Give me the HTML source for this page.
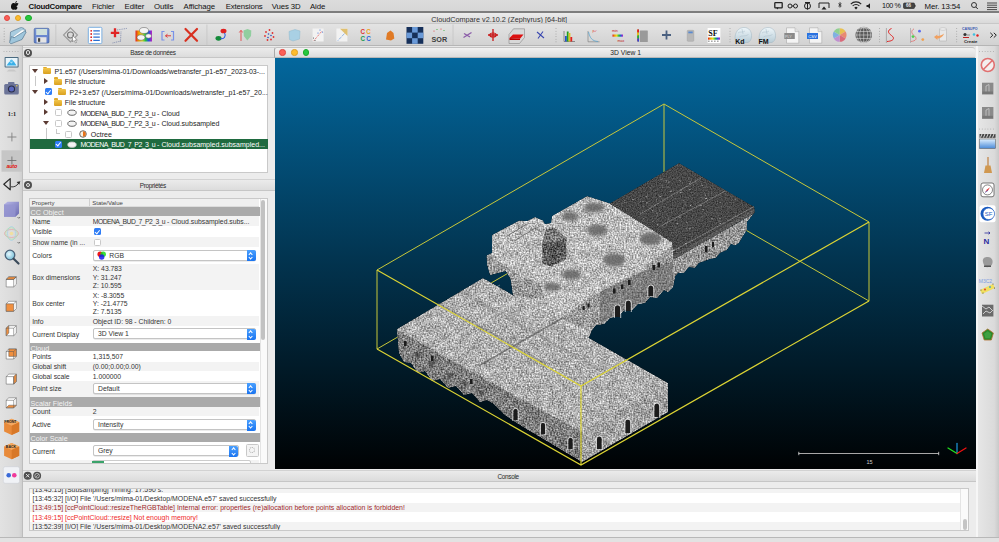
<!DOCTYPE html>
<html><head><meta charset="utf-8"><style>
*{margin:0;padding:0;box-sizing:border-box}
html,body{width:999px;height:542px;overflow:hidden;background:#e8e8e8;font-family:"Liberation Sans",sans-serif;color:#222}
.a{position:absolute}
.t{position:absolute;white-space:nowrap;line-height:1}
.tl{position:absolute;border-radius:50%}
.dockt{position:absolute;background:linear-gradient(#ebebeb,#dcdcdc);border-top:1px solid #d2d2d2;border-bottom:1px solid #c6c6c6}
.box{position:absolute;background:#fff;border:1px solid #c9c9c9}
.row{position:absolute;left:0;width:229px}
.band{position:absolute;left:0;width:230px;background:#aaaaaa}
.band span{position:absolute;left:0.5px;top:1.5px;font-size:7.2px;color:#f2f2f2;line-height:1}
.lbl{position:absolute;left:2.2px;font-size:6.8px;color:#333;line-height:1;white-space:nowrap}
.val{position:absolute;left:62.8px;font-size:6.8px;color:#333;line-height:1;white-space:nowrap}
.combo{position:absolute;left:63px;width:163px;height:11px;background:#fff;border:0.5px solid #c4c4c4;border-radius:2px;box-shadow:0 0.5px 0.5px rgba(0,0,0,.15)}
.combo .btn{position:absolute;right:-0.5px;top:-0.5px;width:9px;height:11px;background:linear-gradient(#4aa0ff,#1a74f0);border-radius:0 2px 2px 0}
.combo .btn:before{content:"";position:absolute;left:2.8px;top:2.5px;width:2.2px;height:2.2px;border-left:0.8px solid #fff;border-top:0.8px solid #fff;transform:rotate(45deg)}
.combo .btn:after{content:"";position:absolute;left:2.8px;top:5.8px;width:2.2px;height:2.2px;border-right:0.8px solid #fff;border-bottom:0.8px solid #fff;transform:rotate(45deg)}
.combo span{position:absolute;left:4px;top:2px;font-size:6.8px;color:#333;line-height:1;white-space:nowrap}
.tr{position:absolute;font-size:7px;color:#1a1a1a;line-height:1;white-space:nowrap}
.tri{position:absolute;width:0;height:0}
.cb{position:absolute;width:7px;height:7px;border:0.7px solid #c8c8c8;border-radius:1.5px;background:#fff}
.cbon{position:absolute;width:7px;height:7px;border-radius:1.5px;background:#2f7df6}
.cbon:after{content:"";position:absolute;left:2.2px;top:0.7px;width:1.8px;height:3.6px;border-right:1px solid #fff;border-bottom:1px solid #fff;transform:rotate(40deg)}
.folder{position:absolute;width:8px;height:6px;background:linear-gradient(#f3c64a,#d9a020);border-radius:1px}
.folder:before{content:"";position:absolute;left:0;top:-1.3px;width:3.5px;height:1.5px;background:#e0aa2a;border-radius:1px 1px 0 0}
.con{position:absolute;left:3px;font-size:6.9px;line-height:1;white-space:nowrap;color:#222}
</style></head><body>
<div class="a" style="left:0;top:0;width:999px;height:11px;background:linear-gradient(#dcdcdc,#d6d6d6)"></div>
<div class="a" style="left:0;top:11px;width:999px;height:1.5px;background:#7e7e7e"></div>
<svg class="a" style="left:10.5px;top:1.2px" width="8" height="8.5" viewBox="0 0 16 17"><path d="M13.2 9.1c0-2.3 1.9-3.4 2-3.5-1.1-1.6-2.8-1.8-3.4-1.8-1.4-.1-2.8.9-3.5.9-.7 0-1.8-.8-3-.8C3.7 3.9 2.2 4.8 1.4 6.2-.2 9-.9 13.2 1.6 16.1c.7 1 1.6 1.4 2.6 1.4 1 0 1.4-.7 2.7-.7 1.2 0 1.6.7 2.7.6 1.1 0 1.8-1 2.5-1.9.8-1.1 1.1-2.2 1.1-2.3 0 0-2.1-.8-2.1-3.3zM11 2.6c.6-.7 1-1.7.9-2.6-.8 0-1.9.6-2.5 1.3-.5.6-1 1.6-.9 2.5.9.1 1.9-.5 2.5-1.2z" fill="#111"/></svg>
<div class="t" style="left:28.5px;top:2.5px;font-size:7.8px;font-weight:bold;color:#111;letter-spacing:-0.2px">CloudCompare</div>
<div class="t" style="left:92px;top:2.5px;font-size:7.8px;letter-spacing:-0.12px;color:#111">Fichier</div>
<div class="t" style="left:124.6px;top:2.5px;font-size:7.8px;letter-spacing:-0.12px;color:#111">Editer</div>
<div class="t" style="left:154px;top:2.5px;font-size:7.8px;letter-spacing:-0.12px;color:#111">Outils</div>
<div class="t" style="left:183.6px;top:2.5px;font-size:7.8px;letter-spacing:-0.12px;color:#111">Affichage</div>
<div class="t" style="left:225.7px;top:2.5px;font-size:7.8px;letter-spacing:-0.12px;color:#111">Extensions</div>
<div class="t" style="left:271.7px;top:2.5px;font-size:7.8px;letter-spacing:-0.12px;color:#111">Vues 3D</div>
<div class="t" style="left:310px;top:2.5px;font-size:7.8px;letter-spacing:-0.12px;color:#111">Aide</div>
<svg class="a" style="left:770px;top:0" width="229" height="11" viewBox="770 0 229 11">
<g fill="none" stroke="#222" stroke-width="1">
<rect x="774.8" y="2.6" width="7.4" height="5.2" rx="0.6" stroke-width="1.3"/>
<path d="M776.2 7.6l1.2 2 1.2-2" fill="#222" stroke="none"/>
<circle cx="790" cy="6" r="2" /><circle cx="795.5" cy="6" r="2"/><path d="M792 6h1.5"/>
<circle cx="807.5" cy="6" r="3"/><path d="M805 2.5h5M807.5 2.5v7"/>
<path d="M819 8V3h10v5"/><path d="M821.5 9.5h5l-2.5-3z" fill="#222" stroke="none"/>
<path d="M838.3 3.5l3 2.5-1.5 1.3V2.5l1.5 1.2-3 2.6" stroke-width="0.7"/>
<path d="M850.8 4.2a7 7 0 0 1 10.4 0M852.6 6a4.6 4.6 0 0 1 6.8 0" stroke-width="1.1"/><path d="M854.3 7.7a2.4 2.4 0 0 1 3.4 0L856 9.5z" fill="#222" stroke="none"/>
<path d="M866.5 5h1.5l2-1.8v5.6l-2-1.8h-1.5z" fill="#222" stroke="none"/>
<rect x="903.5" y="3" width="11" height="5.5" rx="1" fill="#444" stroke="#222" stroke-width="0.6"/>
<path d="M915 4.8v2" stroke-width="1"/>
<circle cx="974" cy="5" r="2.5" stroke-width="0.9"/><path d="M975.8 7l2 2" stroke-width="1"/>
<path d="M987 3h10M987 5.2h10M987 7.4h10M987 9.6h10" stroke-width="0.8"/>
</g></svg>
<div class="t" style="left:882px;top:2.4px;font-size:7.2px;letter-spacing:-0.35px;color:#111">100 %</div>
<div class="t" style="left:906px;top:3.6px;font-size:4.5px;color:#eee;font-weight:bold">66</div>
<div class="t" style="left:924.6px;top:2.5px;font-size:7.8px;letter-spacing:-0.12px;color:#111">Mer. 13:54</div>
<div class="a" style="left:0;top:12.5px;width:999px;height:10.5px;background:linear-gradient(#ececec,#d9d9d9)"></div>
<div class="tl" style="left:3.9000000000000004px;top:14.8px;width:6.6px;height:6.6px;background:#fc5f57;border:0.5px solid #e14640"></div>
<div class="tl" style="left:14.599999999999998px;top:14.8px;width:6.6px;height:6.6px;background:#fdbc2e;border:0.5px solid #dfa023"></div>
<div class="tl" style="left:25.0px;top:14.8px;width:6.6px;height:6.6px;background:#28c840;border:0.5px solid #1aab29"></div>
<div class="t" style="left:431.3px;top:15.8px;font-size:7.25px;color:#333">CloudCompare v2.10.2 (Zephyrus) [64-bit]</div>
<div class="a" style="left:0;top:23px;width:999px;height:23px;background:linear-gradient(#e3e3e3,#d2d2d2);border-top:0.5px solid #c8c8c8;border-bottom:1px solid #b5b5b5"></div>
<svg class="a" style="left:0;top:23px" width="999" height="23" viewBox="0 23 999 23">
<defs>
<linearGradient id="gfold" x1="0" y1="0" x2="0" y2="1"><stop offset="0" stop-color="#cfe6f2"/><stop offset="1" stop-color="#8fbcd6"/></linearGradient>
<linearGradient id="gflop" x1="0" y1="0" x2="0" y2="1"><stop offset="0" stop-color="#7a96d8"/><stop offset="1" stop-color="#5a7ac8"/></linearGradient>
<linearGradient id="grain" x1="0" y1="0" x2="1" y2="0"><stop offset="0" stop-color="#e02020"/><stop offset=".2" stop-color="#f0a000"/><stop offset=".4" stop-color="#e8e020"/><stop offset=".6" stop-color="#20c040"/><stop offset=".8" stop-color="#2050e0"/><stop offset="1" stop-color="#c020c0"/></linearGradient>
<linearGradient id="gkd" x1="0" y1="0" x2="0" y2="1"><stop offset="0" stop-color="#eef6fa"/><stop offset="1" stop-color="#b8ccd6"/></linearGradient>
</defs>
<!-- handle dots -->
<g fill="#a8a8a8"><circle cx="4.2" cy="28.5" r="0.55"/><circle cx="4.2" cy="31.2" r="0.55"/><circle cx="4.2" cy="33.9" r="0.55"/><circle cx="4.2" cy="36.6" r="0.55"/><circle cx="4.2" cy="39.3" r="0.55"/><circle cx="4.2" cy="41.6" r="0.55"/></g>
<!-- open folder -->
<path d="M10 41.5 L10.5 32 L19.5 28 L21.5 27.5 L24 28.5 L25.5 30 L25.5 31.5 L22 39 Z" fill="#a8cce0" stroke="#5c7e96" stroke-width="0.7"/>
<path d="M13 36.5 L22 29.8 L24.5 30.2 L24.8 31.2 L15.5 38 Z" fill="#fafcfd" stroke="#8aa4b4" stroke-width="0.4"/>
<path d="M9.5 42.5 L11.5 36.5 L14 37.8 L24.8 31 L26.2 32 L22 39.5 L11 43.8 Z" fill="#9fc6dc" stroke="#5c7e96" stroke-width="0.7"/>
<!-- floppy -->
<rect x="34.2" y="28.3" width="14.8" height="14.8" rx="1.2" fill="url(#gflop)" stroke="#3b5a98" stroke-width="0.6"/>
<rect x="36.2" y="29" width="10.8" height="6" fill="#cfe0dc"/>
<rect x="36.5" y="37.2" width="10" height="5.5" fill="#e4e4e4"/>
<rect x="38" y="38.2" width="2.2" height="3.6" fill="#444"/>
<!-- separator -->
<line x1="55.8" y1="24.5" x2="55.8" y2="45" stroke="#c4c4c4" stroke-width="0.8"/>
<!-- pick icon -->
<g fill="none" stroke="#8a8a8a" stroke-width="1.1">
<path d="M70.5 27.8 L77.5 35 L70.5 42 L63.5 35 Z" stroke="#9a9a9a"/>
<circle cx="70.5" cy="35" r="3" stroke="#777"/>
</g>
<path d="M72.5 35.5 L72.5 42 L74 40.5 L75.5 43 L76.5 42.5 L75.2 40 L77.3 40 Z" fill="#fff" stroke="#777" stroke-width="0.6"/>
<!-- list -->
<rect x="88.3" y="27.3" width="13.6" height="16.3" rx="1.2" fill="#fff" stroke="#7aaee0" stroke-width="1"/>
<g fill="#d82020"><circle cx="91.2" cy="30.8" r="0.9"/><circle cx="91.2" cy="34" r="0.9"/><circle cx="91.2" cy="37.2" r="0.9"/><circle cx="91.2" cy="40.4" r="0.9"/></g>
<g stroke="#2a6ed0" stroke-width="1.2"><path d="M93.3 30.8h6.5M93.3 34h6.5M93.3 37.2h6.5M93.3 40.4h6.5"/></g>
<!-- red cross with dotted -->
<path d="M110.8 32.8h8.5M115 28.3v9" stroke="#e02525" stroke-width="2.3"/>
<path d="M117 30 L127.5 28.3M121 31.5 L120.5 41.5 M112.5 43 L121 41" stroke="#5a6a9a" stroke-width="0.6" stroke-dasharray="1 0.8"/>
<!-- rainbow sheep -->
<rect x="135.5" y="30.5" width="16.5" height="11" fill="url(#grain)"/>
<ellipse cx="144" cy="30.5" rx="4.5" ry="3" fill="#f4f4f4" stroke="#555" stroke-width="0.5"/>
<ellipse cx="141" cy="37.5" rx="4" ry="2.8" fill="#f4f4f4" stroke="#555" stroke-width="0.5"/>
<ellipse cx="148.5" cy="36" rx="3" ry="2.2" fill="#f4f4f4" stroke="#555" stroke-width="0.5"/>
<!-- [<-] -->
<path d="M164.5 31.5h-2.5v8.5h2.5M171 31.5h2.5v8.5H171" fill="none" stroke="#7a92e8" stroke-width="1.2"/>
<path d="M165.5 35.8h5.5M165.5 35.8l2-1.6M165.5 35.8l2 1.6" stroke="#e03a3a" stroke-width="1"/>
<!-- red X -->
<path d="M185.5 29 L197 40.8 M197 29 L185.5 40.8" stroke="#d83020" stroke-width="2.2" stroke-linecap="round"/>
<line x1="206.9" y1="24.5" x2="206.9" y2="45" stroke="#c4c4c4" stroke-width="0.8"/>
<!-- blobs -->
<ellipse cx="223.5" cy="31" rx="3" ry="2.3" fill="#e02020"/>
<ellipse cx="218.5" cy="38.3" rx="3" ry="2.4" fill="#148a3a"/>
<path d="M224.5 33 C226.5 36 224 39.5 220.5 38.5" fill="none" stroke="#2a5ae0" stroke-width="1.1"/>
<!-- arrow + shield -->
<path d="M241 41v-10M239.3 32.5l1.7-2.3 1.7 2.3" stroke="#e04a4a" stroke-width="0.9" fill="none"/>
<path d="M243.5 30.5 L247.5 29 L251.3 30.5 L251 36 L247.3 40.5 L243.8 36 Z" fill="#88cc98" opacity="0.9"/>
<!-- red/blue dots -->
<g fill="#e03030"><circle cx="266" cy="32" r="0.9"/><circle cx="269.5" cy="30" r="0.9"/><circle cx="272.5" cy="33" r="0.9"/><circle cx="265" cy="36" r="0.9"/><circle cx="271" cy="39.5" r="0.9"/><circle cx="267.5" cy="40" r="0.9"/><circle cx="273.5" cy="37" r="0.9"/></g>
<g fill="#3050c0"><circle cx="268.5" cy="34" r="0.8"/><circle cx="271" cy="35.5" r="0.8"/><circle cx="268" cy="37.5" r="0.8"/></g>
<!-- light blue blob -->
<path d="M289 31.5 L295 29.5 L300 31 L299.5 39 L293 41 L289.5 39.5 Z" fill="#a9d0e4" stroke="#8fb8cc" stroke-width="0.5"/>
<!-- dots-line -->
<rect x="312.6" y="28.5" width="11" height="13" fill="#f2f2f2"/>
<path d="M314 40.5 L322 31" stroke="#e03a3a" stroke-width="0.8" stroke-dasharray="1 1"/>
<g fill="#3a6ad0"><circle cx="320" cy="30" r="0.6"/><circle cx="322.5" cy="32" r="0.6"/><circle cx="318" cy="33" r="0.6"/></g>
<g fill="#333"><circle cx="313.5" cy="38" r="0.5"/><circle cx="315" cy="40.5" r="0.5"/></g>
<!-- triangle yellow -->
<rect x="336.4" y="28.5" width="11" height="13" fill="#f2f2f2"/>
<path d="M340 28.7 L347.5 28.7 L347.5 36 Z" fill="#e0c070"/>
<path d="M338 40.5 L345 33" stroke="#3a7ad0" stroke-width="0.8" stroke-dasharray="1 1"/>
<!-- CCCC -->
<text x="360.5" y="34" font-family="Liberation Sans" font-weight="bold" font-size="6.3" fill="#e03030">C</text>
<text x="366.2" y="34" font-family="Liberation Sans" font-weight="bold" font-size="6.3" fill="#f0a020">C</text>
<text x="360.5" y="41.2" font-family="Liberation Sans" font-weight="bold" font-size="6.3" fill="#209a50">C</text>
<text x="366.2" y="41.2" font-family="Liberation Sans" font-weight="bold" font-size="6.3" fill="#2a60d8">C</text>
<!-- orange blob -->
<path d="M387 33 L390.5 30.5 L393.5 33 L394.3 38.5 L391 40.5 L386 39.5 Z" fill="#e07a25"/>
<!-- checker -->
<rect x="406.5" y="27" width="16.8" height="16.8" fill="#16305a"/>
<g fill="#6a9ad8"><rect x="412.1" y="27" width="5.6" height="5.6"/><rect x="406.5" y="32.6" width="5.6" height="5.6"/><rect x="417.7" y="32.6" width="5.6" height="5.6"/><rect x="412.1" y="38.2" width="5.6" height="5.6"/></g>
<!-- SOR -->
<text x="431.5" y="42" font-family="Liberation Sans" font-weight="bold" font-size="7.2" fill="#404040">SOR</text>
<g fill="#e04040"><circle cx="434" cy="31" r="0.6"/><circle cx="441" cy="29" r="0.6"/></g><g fill="#40b040"><circle cx="437" cy="29.5" r="0.6"/><circle cx="444" cy="30.5" r="0.6"/></g>
<line x1="453" y1="24.5" x2="453" y2="45" stroke="#c4c4c4" stroke-width="0.8"/>
<!-- purple scissors -->
<path d="M463.5 37.5 L471.5 32.5 M464 33.5 L470 37" stroke="#8a5aa8" stroke-width="1.2"/>
<!-- red move -->
<path d="M493 29v12M488 35h10" stroke="#c81818" stroke-width="1.3"/>
<ellipse cx="493" cy="35" rx="3.2" ry="2" fill="none" stroke="#c81818" stroke-width="1.1"/>
<!-- red box -->
<path d="M509 34.5 L513.5 28.8 L524.5 28.8 L524.5 37.5 L519.5 43.5 L509 43.5 Z" fill="#d8d8d8" stroke="#888" stroke-width="0.6"/>
<path d="M509.5 38 L513 34.5 L523.5 34.5 L520 38.8 Z" fill="#dc1010"/>
<path d="M509.5 38 L520 38.8 L520 40 L509.5 40 Z" fill="#b00"/>
<!-- blue scissors -->
<path d="M537 32 L544 38 M538 38.5 L543 31.5" stroke="#3a48b0" stroke-width="1.1"/>
<g fill="#a0a0a0"><circle cx="556" cy="28.5" r="0.5"/><circle cx="556" cy="31.2" r="0.5"/><circle cx="556" cy="33.9" r="0.5"/><circle cx="556" cy="36.6" r="0.5"/><circle cx="556" cy="39.3" r="0.5"/><circle cx="556" cy="41.8" r="0.5"/></g>
<!-- histogram -->
<path d="M564 31 V41.5 H575" fill="none" stroke="#555" stroke-width="0.6"/>
<rect x="565" y="36" width="1.8" height="5.5" fill="#2050d0"/><rect x="566.8" y="31.5" width="1.8" height="10" fill="#20a020"/><rect x="568.6" y="33" width="1.8" height="8.5" fill="#e0c020"/><rect x="570.4" y="37" width="1.8" height="4.5" fill="#e02020"/>
<!-- curve -->
<path d="M588 31 V41.8 H599.5" fill="none" stroke="#777" stroke-width="0.6"/>
<path d="M588.5 32 C590 38 592 41 598 41.5" fill="none" stroke="#50a0d0" stroke-width="0.7"/>
<text x="592.5" y="31.5" font-family="Liberation Sans" font-size="3.5" fill="#e03030">pᵤᶠ</text>
<!-- min/max -->
<text x="612" y="31.5" font-family="Liberation Sans" font-size="3.6" fill="#c02020">min</text>
<rect x="612.5" y="34.5" width="10.5" height="2.2" fill="url(#grain)"/>
<text x="617.5" y="41.5" font-family="Liberation Sans" font-size="3.6" fill="#c02020">max</text>
<!-- color bar -->
<rect x="637.2" y="29.5" width="1.8" height="12" fill="url(#grain)" transform="rotate(0)"/>
<path d="M637.2 29.5h1.8v3h-1.8z" fill="#e02020"/><path d="M637.2 32.5h1.8v3h-1.8z" fill="#e0c020"/><path d="M637.2 35.5h1.8v3h-1.8z" fill="#20b040"/><path d="M637.2 38.5h1.8v3h-1.8z" fill="#4040d0"/>
<rect x="639.8" y="30.5" width="8" height="11.5" fill="#9a9a9a" rx="0.5"/>
<!-- plus -->
<path d="M662 35h9M666.5 30.5v9" stroke="#4a6080" stroke-width="1.8"/>
<!-- calc -->
<rect x="687.2" y="30.3" width="6.6" height="11" rx="0.8" fill="#b8b8b8" stroke="#999" stroke-width="0.4"/>
<rect x="688.3" y="31.5" width="4.4" height="1.8" fill="#5a8ad0"/>
<!-- SF -->
<rect x="707.6" y="28" width="12.8" height="15" fill="#fff"/>
<text x="708.2" y="36" font-family="Liberation Serif" font-weight="bold" font-size="8" fill="#111">SF</text>
<rect x="708" y="37.5" width="12" height="2.2" fill="url(#grain)"/>
<g fill="#555"><rect x="708.5" y="40.5" width="0.8" height="1.5"/><rect x="711.5" y="40.5" width="0.8" height="1.5"/><rect x="714.5" y="40.5" width="0.8" height="1.5"/><rect x="717.5" y="40.5" width="0.8" height="1.5"/></g>
<g fill="#a0a0a0"><circle cx="730" cy="28.5" r="0.5"/><circle cx="730" cy="31.2" r="0.5"/><circle cx="730" cy="33.9" r="0.5"/><circle cx="730" cy="36.6" r="0.5"/><circle cx="730" cy="39.3" r="0.5"/><circle cx="730" cy="41.8" r="0.5"/></g>
<!-- Kd, FM -->
<path d="M735.5 41 C734 35 736.5 28.5 743 27.5 C749.5 27 752 32 751.5 37 C751.3 39.5 750 41.5 748 42.5 L737 42.5 Z" fill="url(#gkd)" stroke="#9fb4c0" stroke-width="0.5"/>
<path d="M738 33 C740 31 743 33 745 31 M739.5 37 C742 35 745 37 748.5 34.5 M742 29 L743 34" fill="none" stroke="#a8bcc8" stroke-width="0.5"/>
<text x="735.3" y="43.6" font-family="Liberation Sans" font-weight="bold" font-size="7" fill="#111">Kd</text>
<path d="M759.5 41 C758 35 760.5 28.5 767 27.5 C773.5 27 776 32 775.5 37 C775.3 39.5 774 41.5 772 42.5 L761 42.5 Z" fill="url(#gkd)" stroke="#9fb4c0" stroke-width="0.5"/>
<path d="M762 33 C764 31 767 33 769 31 M763.5 37 C766 35 769 37 772.5 34.5 M766 29 L767 34" fill="none" stroke="#a8bcc8" stroke-width="0.5"/>
<text x="758.6" y="43.6" font-family="Liberation Sans" font-weight="bold" font-size="7" fill="#111">FM</text>
<!-- doc icons -->
<path d="M786.5 27.8 H795 L798.8 31.6 V43.2 H786.5 Z" fill="#f4f4f4" stroke="#a8a8a8" stroke-width="0.6"/>
<path d="M795 27.8 V31.6 H798.8" fill="#e0e0e0" stroke="#a8a8a8" stroke-width="0.5"/>
<rect x="784.3" y="33" width="10.5" height="6" fill="#8a8a8a"/>
<text x="785" y="37.7" font-family="Liberation Sans" font-size="3.8" fill="#ddd">PLY</text>
<path d="M809.5 27.8 H818 L821.8 31.6 V43.2 H809.5 Z" fill="#f4f4f4" stroke="#a8a8a8" stroke-width="0.6"/>
<path d="M818 27.8 V31.6 H821.8" fill="#e0e0e0" stroke="#a8a8a8" stroke-width="0.5"/>
<rect x="807" y="33" width="11" height="6" fill="#2a72e0"/>
<text x="808.2" y="37.8" font-family="Liberation Sans" font-size="4.2" fill="#fff">CSV</text>
<!-- pie -->
<g transform="translate(839.7 35)">
<path d="M0 0 L0 -6.8 A6.8 6.8 0 0 1 5.9 -3.4 Z" fill="#e8c050"/>
<path d="M0 0 L5.9 -3.4 A6.8 6.8 0 0 1 5.9 3.4 Z" fill="#e88a70"/>
<path d="M0 0 L5.9 3.4 A6.8 6.8 0 0 1 0 6.8 Z" fill="#d86a7a"/>
<path d="M0 0 L0 6.8 A6.8 6.8 0 0 1 -5.9 3.4 Z" fill="#c090d0"/>
<path d="M0 0 L-5.9 3.4 A6.8 6.8 0 0 1 -5.9 -3.4 Z" fill="#80b0e0"/>
<path d="M0 0 L-5.9 -3.4 A6.8 6.8 0 0 1 0 -6.8 Z" fill="#90d090"/>
</g>
<!-- globe -->
<circle cx="863.7" cy="35" r="8.3" fill="#5a5a5a"/>
<g fill="none" stroke="#e8e8e8" stroke-width="0.5"><ellipse cx="863.7" cy="35" rx="4" ry="8"/><ellipse cx="863.7" cy="35" rx="7" ry="8"/><path d="M856 31.5h15.5M855.5 35h16.5M856 38.5h15.5M858 28h11.5M858 42h11.5M863.7 27v16"/></g>
<g fill="#a0a0a0"><circle cx="879.5" cy="28.5" r="0.5"/><circle cx="879.5" cy="31.2" r="0.5"/><circle cx="879.5" cy="33.9" r="0.5"/><circle cx="879.5" cy="36.6" r="0.5"/><circle cx="879.5" cy="39.3" r="0.5"/><circle cx="879.5" cy="41.8" r="0.5"/></g>
<!-- red curve -->
<line x1="886.4" y1="28" x2="886.4" y2="43" stroke="#888" stroke-width="0.6"/>
<path d="M891.5 28.5 C887 30.5 888 33 891.5 35.5 C895 38 894 41 887 41.5" fill="none" stroke="#e02020" stroke-width="1"/>
<!-- curve with dots -->
<line x1="910.5" y1="28" x2="910.5" y2="43" stroke="#999" stroke-width="0.6"/>
<path d="M914 28.8 C910.5 31 911.5 33.5 914.5 36 C917.5 38.5 916 41 910.8 41.5" fill="none" stroke="#e07070" stroke-width="0.8"/>
<circle cx="919.5" cy="31.2" r="1.4" fill="#5a6af0"/><circle cx="913" cy="36.6" r="1.4" fill="#50d050"/><circle cx="922.8" cy="39.6" r="1.4" fill="#f0a050"/>
<!-- arrow cylinder -->
<path d="M939.5 29 h7 v12 h-7 z" fill="#e8e8e8" stroke="#aaa" stroke-width="0.5"/>
<ellipse cx="943" cy="29" rx="3.5" ry="1.2" fill="#f4f4f4" stroke="#aaa" stroke-width="0.5"/>
<path d="M934 37 L937.5 34.5 L937.3 36 C940 36 942.5 35 944 33.5 C943 37 940 38.5 937.3 38.5 L937.5 40 Z" fill="#f0a060"/>
<g fill="#a0a0a0"><circle cx="956.7" cy="28.5" r="0.5"/><circle cx="956.7" cy="31.2" r="0.5"/><circle cx="956.7" cy="33.9" r="0.5"/><circle cx="956.7" cy="36.6" r="0.5"/><circle cx="956.7" cy="39.3" r="0.5"/><circle cx="956.7" cy="41.8" r="0.5"/></g>
<!-- CANUPO -->
<text x="962" y="30.3" font-family="Liberation Sans" font-weight="bold" font-size="3.6" fill="#3a58b0">CANUPO</text>
<circle cx="965" cy="34.5" r="1.6" fill="#333"/><path d="M967 35h3" stroke="#555" stroke-width="0.6"/><circle cx="974" cy="34.5" r="1.3" fill="#40c0e0"/><circle cx="977.5" cy="35.5" r="1.2" fill="#e02020"/>
<rect x="963" y="37" width="6" height="1" fill="#c02020"/>
<text x="964" y="42.5" font-family="Liberation Sans" font-weight="bold" font-size="4.3" fill="#222">Create</text>
<!-- >> -->
<path d="M990.3 32.8 L992.8 35.2 L990.3 37.6 M993.8 32.8 L996.3 35.2 L993.8 37.6" fill="none" stroke="#222" stroke-width="1"/>
</svg>

<div class="a" style="left:0;top:46px;width:22.5px;height:491px;background:linear-gradient(90deg,#e2e2e2,#d8d8d8 85%,#cfcfcf);border-right:0.5px solid #bdbdbd"></div>
<svg class="a" style="left:0;top:46px" width="23" height="491" viewBox="0 46 23 491">
<defs>
<linearGradient id="gcube" x1="0" y1="0" x2="1" y2="1"><stop offset="0" stop-color="#b8b8e8"/><stop offset="1" stop-color="#6a6ab0"/></linearGradient>
<radialGradient id="gmag" cx=".4" cy=".4" r=".6"><stop offset="0" stop-color="#e8f8ff"/><stop offset="1" stop-color="#7ac0d8"/></radialGradient>
</defs>
<g fill="#a8a8a8"><circle cx="4" cy="51.6" r="0.5"/><circle cx="6.8" cy="51.6" r="0.5"/><circle cx="9.6" cy="51.6" r="0.5"/><circle cx="12.4" cy="51.6" r="0.5"/><circle cx="15.2" cy="51.6" r="0.5"/><circle cx="18" cy="51.6" r="0.5"/></g>
<!-- monitor -->
<rect x="4.6" y="57" width="14" height="10.5" rx="0.8" fill="#4a6a80" />
<rect x="5.6" y="58" width="12" height="8.5" fill="#e8f4fa"/>
<path d="M6.5 65.5 L9.5 61.5 L11.5 63.5 L13.5 61 L16.5 65.5 Z" fill="#3ab0e8"/>
<circle cx="11.5" cy="61" r="1.6" fill="#5ac0f0"/>
<path d="M9 69.5 L14 69.5 L16.5 71.5 L6.5 71.5 Z" fill="#c8c8c8"/>
<!-- camera -->
<rect x="4.2" y="84" width="14.6" height="10.5" rx="1.5" fill="#6c7498"/>
<rect x="8" y="82" width="6.5" height="2.5" rx="0.8" fill="#6c7498"/>
<circle cx="11.5" cy="89" r="3.6" fill="#2a2e48"/>
<circle cx="11.5" cy="89" r="2.5" fill="#5a68c0"/>
<circle cx="16.8" cy="85.8" r="0.7" fill="#f0d040"/>
<!-- 1:1 -->
<text x="7.8" y="115.5" font-family="Liberation Serif" font-weight="bold" font-size="6.2" fill="#222">1:1</text>
<!-- plus -->
<path d="M7.4 137h9M11.9 132.6v8.8" stroke="#808080" stroke-width="0.9"/>
<!-- auto (highlighted) -->
<rect x="1.5" y="150.3" width="20.7" height="21.4" fill="#c6c6c6"/>
<path d="M7.4 160.5h9M11.9 156.5v8" stroke="#707070" stroke-width="0.9"/>
<text x="6.4" y="167.6" font-family="Liberation Sans" font-weight="bold" font-style="italic" font-size="5.4" fill="#e01010" letter-spacing="-0.2">auto</text>
<!-- triangle arrow -->
<path d="M3.8 184.2 L10.2 178.6 L10.2 189.8 Z" fill="none" stroke="#2a2a2a" stroke-width="1.2" stroke-linejoin="round"/>
<path d="M11 186.8 C14 187.3 16.5 186.2 18.8 183" fill="none" stroke="#2a2a2a" stroke-width="0.9"/>
<path d="M20.3 181.3 L16.6 182.1 L19.3 184.8 Z" fill="#2a2a2a"/>
<!-- purple cube -->
<path d="M4 204.5 L7.5 201.8 L19 201.8 L19 213.5 L15.5 216.8 L4 216.8 Z" fill="url(#gcube)"/>
<path d="M4 204.5 L15.5 204.5 L15.5 216.8 L4 216.8 Z" fill="#9494d0" opacity="0.8"/>
<path d="M17.5 217 l1.3 1.3 l1.3 -1.3" fill="none" stroke="#333" stroke-width="0.6"/>
<!-- colors flower -->
<g fill="none" stroke-width="0.6">
<ellipse cx="11.5" cy="233.5" rx="7" ry="4" stroke="#e89a9a"/>
<ellipse cx="11.5" cy="233.5" rx="4" ry="7" stroke="#9ad0e8"/>
<ellipse cx="11.5" cy="233.5" rx="6" ry="5.5" stroke="#a8e0a8" transform="rotate(45 11.5 233.5)"/>
</g>
<circle cx="11.5" cy="233.5" r="1.8" fill="#f0e0a0"/>
<path d="M17.5 242 l1.3 1.3 l1.3 -1.3" fill="none" stroke="#333" stroke-width="0.6"/>
<!-- magnifier -->
<circle cx="10" cy="255" r="4.8" fill="url(#gmag)" stroke="#4a6078" stroke-width="1.3"/>
<path d="M13.6 258.8 L18.5 263.5" stroke="#3a4a5a" stroke-width="2.2" stroke-linecap="round"/>
<!-- small cubes -->
<g stroke="#555" stroke-width="0.5">
<g transform="translate(0 276.6)"><path d="M6.2 2.8 L8.8 0.3 H16.3 V7.7 L13.7 10.3 H6.2 Z" fill="#fff"/><path d="M6.2 2.8 L8.8 0.3 H16.3 L13.7 2.8 Z" fill="#f09040"/><path d="M6.2 2.8 H13.7 V10.3 M13.7 2.8 L16.3 0.3" fill="none"/></g>
<g transform="translate(0 301)"><path d="M6.2 2.8 L8.8 0.3 H16.3 V7.7 L13.7 10.3 H6.2 Z" fill="#fff"/><path d="M6.2 2.8 H13.7 V10.3 H6.2 Z" fill="#f09040"/><path d="M13.7 2.8 L16.3 0.3" fill="none"/></g>
<g transform="translate(0 325.4)"><path d="M6.2 2.8 L8.8 0.3 H16.3 V7.7 L13.7 10.3 H6.2 Z" fill="#fff"/><path d="M6.2 2.8 L8.8 0.3 V7.7 L6.2 10.3 Z" fill="#f09040"/><path d="M6.2 2.8 H13.7 V10.3 M13.7 2.8 L16.3 0.3" fill="none"/></g>
<g transform="translate(0 348.7)"><path d="M6.2 2.8 L8.8 0.3 H16.3 V7.7 L13.7 10.3 H6.2 Z" fill="#fff"/><path d="M8.8 0.3 H16.3 V7.7 H8.8 Z" fill="#f09040"/><path d="M6.2 2.8 H13.7 V10.3 M13.7 2.8 L16.3 0.3" fill="none"/></g>
<g transform="translate(0 373.8)"><path d="M6.2 2.8 L8.8 0.3 H16.3 V7.7 L13.7 10.3 H6.2 Z" fill="#fff"/><path d="M13.7 2.8 L16.3 0.3 V7.7 L13.7 10.3 Z" fill="#f09040"/><path d="M6.2 2.8 H13.7 V10.3" fill="none"/></g>
<g transform="translate(0 397.5)"><path d="M6.2 2.8 L8.8 0.3 H16.3 V7.7 L13.7 10.3 H6.2 Z" fill="#fff"/><path d="M6.2 10.3 L8.8 7.7 H16.3 L13.7 10.3 Z" fill="#f09040"/><path d="M6.2 2.8 H13.7 V10.3 M13.7 2.8 L16.3 0.3" fill="none"/></g>
</g>
<!-- FRONT / BACK cubes -->
<g>
<path d="M11.7 418.7 L19.2 422.3 V431.5 L11.7 435 L4.1 431.5 V422.3 Z" fill="#e88a3a"/>
<path d="M4.1 422.3 L11.7 425.8 L19.2 422.3 L11.7 418.7 Z" fill="#f4a860"/>
<path d="M11.7 425.8 V435 L19.2 431.5 V422.3 Z" fill="#d87828"/>
<text x="4.2" y="423.2" font-family="Liberation Sans" font-weight="bold" font-size="3.6" fill="#222">FRONT</text>
<path d="M11.7 443 L19.2 446.6 V455.8 L11.7 459.3 L4.1 455.8 V446.6 Z" fill="#e88a3a"/>
<path d="M4.1 446.6 L11.7 450.1 L19.2 446.6 L11.7 443 Z" fill="#f4a860"/>
<path d="M11.7 450.1 V459.3 L19.2 455.8 V446.6 Z" fill="#d87828"/>
<text x="5.8" y="447.5" font-family="Liberation Sans" font-weight="bold" font-size="3.6" fill="#222">BACK</text>
</g>
<!-- dots button -->
<rect x="3.3" y="466.7" width="16.2" height="16.6" rx="2" fill="#f0f2f6" stroke="#c8ccd4" stroke-width="0.5"/>
<circle cx="8.7" cy="475.2" r="2.3" fill="#3a6ad8"/>
<circle cx="14.3" cy="475.2" r="2.3" fill="#f03a9a"/>
</svg>

<div class="a" style="left:975.5px;top:46px;width:23.5px;height:491px;background:linear-gradient(90deg,#f6f6f6 0,#f6f6f6 1.5px,#e6e6e6 2px,#dadada 80%,#c9c9c9)"></div>
<svg class="a" style="left:975px;top:46px" width="24" height="491" viewBox="975 46 24 491">
<defs>
<linearGradient id="gfilm" x1="0" y1="0" x2="0" y2="1"><stop offset="0" stop-color="#dff0ff"/><stop offset="1" stop-color="#4a8ad8"/></linearGradient>
</defs>
<g fill="#a8a8a8"><circle cx="979.5" cy="51.6" r="0.5"/><circle cx="982.3" cy="51.6" r="0.5"/><circle cx="985.1" cy="51.6" r="0.5"/><circle cx="987.9" cy="51.6" r="0.5"/><circle cx="990.7" cy="51.6" r="0.5"/><circle cx="993.5" cy="51.6" r="0.5"/></g>
<!-- no entry -->
<circle cx="987.8" cy="65" r="6.5" fill="#f4eeee" stroke="#e07070" stroke-width="1.6"/>
<path d="M983.3 69.5 L992.3 60.5" stroke="#e07070" stroke-width="1.6"/>
<!-- gray icons -->
<rect x="982" y="82.7" width="11.4" height="11.8" fill="#8a8a8a"/>
<path d="M986 92 V86 L989 84.5 V92" fill="none" stroke="#ddd" stroke-width="0.6"/>
<rect x="982.5" y="91.5" width="10.5" height="2.5" fill="#777"/>
<rect x="982" y="107" width="11.4" height="11.9" fill="#8a8a8a"/>
<path d="M986 116 V110 L989 108.5 V116" fill="none" stroke="#ddd" stroke-width="0.6"/>
<rect x="982.5" y="115.8" width="10.5" height="2.5" fill="#777"/>
<g fill="#a8a8a8"><circle cx="979.5" cy="128.9" r="0.5"/><circle cx="982.3" cy="128.9" r="0.5"/><circle cx="985.1" cy="128.9" r="0.5"/><circle cx="987.9" cy="128.9" r="0.5"/><circle cx="990.7" cy="128.9" r="0.5"/><circle cx="993.5" cy="128.9" r="0.5"/></g>
<!-- film -->
<rect x="979.5" y="134" width="16" height="3.8" fill="#444"/>
<path d="M980.5 137.5 l1.5 -3.5 M983.5 137.5 l1.5 -3.5 M986.5 137.5 l1.5 -3.5 M989.5 137.5 l1.5 -3.5 M992.5 137.5 l1.5 -3.5" stroke="#fff" stroke-width="0.8"/>
<rect x="979.5" y="139" width="16" height="9.5" fill="url(#gfilm)" stroke="#555" stroke-width="0.5"/>
<!-- broom -->
<path d="M988 157 V166" stroke="#c08040" stroke-width="1.2"/>
<path d="M985.5 165.5 H990.5 L992 173 H984 Z" fill="#d09850"/>
<!-- compass -->
<rect x="981" y="183" width="13" height="13.8" rx="2" fill="#fff" stroke="#555" stroke-width="0.8"/>
<circle cx="987.5" cy="189.9" r="5" fill="#fff" stroke="#333" stroke-width="0.6"/>
<path d="M985 192.5 L987 189.4 L990 187.3 L988 190.4 Z" fill="#e03030"/>
<path d="M985 192.5 L988 190.4" stroke="#3050c0" stroke-width="0.6"/>
<!-- SF -->
<rect x="979.5" y="205.3" width="16" height="17" rx="2" fill="#fff"/>
<circle cx="987.5" cy="213.8" r="7" fill="#1a5ac0"/>
<circle cx="988.8" cy="213.8" r="5.8" fill="#fff" stroke="#1a5ac0" stroke-width="0.6"/>
<text x="984.8" y="216.3" font-family="Liberation Sans" font-size="6" fill="#1a5ac0">SF</text>
<!-- N -->
<path d="M984.5 233 H990 M988.5 231.8 L990 233 L988.5 234.2" fill="none" stroke="#2a2a9a" stroke-width="0.8"/>
<text x="983.6" y="243.8" font-family="Liberation Sans" font-weight="bold" font-size="8" fill="#2a2aa0">N</text>
<!-- gray blob -->
<path d="M983 262 C982 258 985.5 256.8 988 257 C991.5 257.2 993 260 992.5 263 C992 265.5 990 267 987.5 267.3 C985 267.3 983.5 265 983 262 Z" fill="#9a9a9a"/>
<rect x="984" y="265.5" width="7" height="1.5" fill="#555"/>
<!-- M3C2 -->
<text x="978.8" y="282.6" font-family="Liberation Sans" font-size="5" fill="#7a9ae0">M3C2</text>
<path d="M980 290 L993 284 L995 288 L982 294 Z" fill="#f0e060"/>
<g fill="#333"><circle cx="981" cy="290" r="0.5"/><circle cx="983" cy="293" r="0.5"/><circle cx="993" cy="284" r="0.5"/><circle cx="994.5" cy="288" r="0.5"/></g>
<circle cx="985" cy="289.5" r="0.9" fill="#e03030"/><circle cx="990" cy="287" r="0.9" fill="#40a0d0"/>
<!-- noise square -->
<rect x="982" y="304.7" width="11.4" height="11.8" fill="#6a6a6a"/>
<path d="M982 306 l4 3 l3 -2 l4 4 M983 314 l3 -3 l4 2 l3 -3" stroke="#ccc" stroke-width="1" fill="none"/>
<!-- pentagon -->
<path d="M987.7 329 L993.4 333 L991.3 340 L984.2 340 L982 333 Z" fill="#2a8a2a" stroke="#b07030" stroke-width="0.8"/>
<path d="M987.7 331.2 L991.2 333.8 L990 338.2 L985.4 338.2 L984.2 333.8 Z" fill="#40a040"/>
</svg>

<div class="a" style="left:22.5px;top:46px;width:252.5px;height:423px;background:#ececec"></div>
<div class="dockt" style="left:22.5px;top:47.3px;width:252.5px;height:10.7px"></div>
<div class="a" style="left:23.8px;top:48.5px;width:8px;height:8px;border-radius:50%;background:#505050"></div>
<div class="a" style="left:25.6px;top:50.3px;width:4.4px;height:4.4px;border-radius:50%;border:0.6px solid #e8e8e8"></div>
<div class="t" style="left:130.3px;top:50.2px;font-size:6.4px;letter-spacing:-0.3px;color:#2a2a2a">Base de données</div>
<div class="box" style="left:29.2px;top:64.5px;width:238.8px;height:108px"></div>
<div class="tri" style="left:32px;top:68.7px;border-left:3px solid transparent;border-right:3px solid transparent;border-top:4.5px solid #5b3b33"></div><div class="folder" style="left:43px;top:68.2px"></div><div class="tr" style="left:54.4px;top:67.9px;color:#222">P1.e57 (/Users/mima-01/Downloads/wetransfer_p1-e57_2023-03-...</div>
<div class="a" style="left:35px;top:76px;width:0.6px;height:10px;background:#c8c8c8"></div>
<div class="tri" style="left:43.7px;top:78.1px;border-top:3px solid transparent;border-bottom:3px solid transparent;border-left:4.5px solid #5b3b33"></div><div class="folder" style="left:54px;top:78.6px"></div><div class="tr" style="left:64.8px;top:78.3px;color:#222">File structure</div>
<div class="tri" style="left:32px;top:89.5px;border-left:3px solid transparent;border-right:3px solid transparent;border-top:4.5px solid #5b3b33"></div><div class="cbon" style="left:calc(44.8px - 0.3px);top:calc(88.3px - 0.3px)"></div><div class="folder" style="left:58px;top:89.0px"></div><div class="tr" style="left:69.5px;top:88.7px;color:#222">P2+3.e57 (/Users/mima-01/Downloads/wetransfer_p1-e57_20...</div>
<div class="tri" style="left:43.7px;top:99px;border-top:3px solid transparent;border-bottom:3px solid transparent;border-left:4.5px solid #5b3b33"></div><div class="folder" style="left:54px;top:99.5px"></div><div class="tr" style="left:64.8px;top:99.2px;color:#222">File structure</div>
<div class="tri" style="left:43.7px;top:109.4px;border-top:3px solid transparent;border-bottom:3px solid transparent;border-left:4.5px solid #5b3b33"></div><div class="cb" style="left:calc(55.099999999999994px - 0.3px);top:calc(109.2px - 0.3px)"></div><svg class="a" style="left:67.3px;top:108.9px" width="10" height="7" viewBox="0 0 10 7"><ellipse cx="5" cy="3.7" rx="4.2" ry="2.6" fill="#f4f4f4" stroke="#555" stroke-width="0.9"/></svg><div class="tr" style="left:80.4px;top:109.6px;color:#222"><span style="letter-spacing:-0.55px">MODENA_BUD_7_P2_3_u</span> - Cloud</div>
<div class="tri" style="left:42.5px;top:121px;border-left:3px solid transparent;border-right:3px solid transparent;border-top:4.5px solid #5b3b33"></div><div class="cb" style="left:calc(55.099999999999994px - 0.3px);top:calc(119.8px - 0.3px)"></div><svg class="a" style="left:67.3px;top:119.5px" width="10" height="7" viewBox="0 0 10 7"><ellipse cx="5" cy="3.7" rx="4.2" ry="2.6" fill="#f4f4f4" stroke="#555" stroke-width="0.9"/></svg><div class="tr" style="left:80.4px;top:120.2px;color:#222"><span style="letter-spacing:-0.55px">MODENA_BUD_7_P2_3_u</span> - Cloud.subsampled</div>
<div class="a" style="left:45.5px;top:128px;width:0.6px;height:12px;background:#c8c8c8"></div>
<div class="a" style="left:56.4px;top:128.5px;width:4px;height:5.5px;border-left:0.6px solid #c8c8c8;border-bottom:0.6px solid #c8c8c8"></div>
<div class="cb" style="left:calc(65.6px - 0.3px);top:calc(130.8px - 0.3px)"></div><svg class="a" style="left:78.5px;top:130px" width="8" height="8" viewBox="0 0 8 8"><circle cx="4" cy="4" r="3.3" fill="#f8f0e0" stroke="#333" stroke-width="0.7"/><path d="M4 1.2A2.8 2.8 0 0 1 4 6.8z" fill="#e8731a"/></svg><div class="tr" style="left:90.8px;top:131.2px;color:#222">Octree</div>
<div class="a" style="left:29.8px;top:139.1px;width:237.8px;height:10.2px;background:#1f6a3f"></div>
<div class="cbon" style="left:calc(55.099999999999994px - 0.3px);top:calc(140.8px - 0.3px)"></div><svg class="a" style="left:67.3px;top:140.5px" width="10" height="7" viewBox="0 0 10 7"><ellipse cx="5" cy="3.7" rx="4.2" ry="2.6" fill="#f4f4f4" stroke="#ccc" stroke-width="0.9"/></svg><div class="tr" style="left:80.4px;top:140.8px;color:#fff"><span style="letter-spacing:-0.55px">MODENA_BUD_7_P2_3_u</span> - Cloud.subsampled.subsampled...</div>
<div class="dockt" style="left:22.5px;top:178.7px;width:252.5px;height:12.3px"></div>
<div class="a" style="left:23.8px;top:181px;width:8px;height:8px;border-radius:50%;background:#505050"></div>
<div class="a" style="left:25.6px;top:182.8px;width:4.4px;height:4.4px;border-radius:50%;border:0.6px solid #e8e8e8"></div>
<div class="t" style="left:139.7px;top:182.5px;font-size:6.4px;letter-spacing:-0.3px;color:#2a2a2a">Propriétés</div>
<div class="box" style="left:29px;top:197.5px;width:239px;height:266px;overflow:hidden"><div class="row" style="top:-1px;height:9px;background:#efefef;border-bottom:0.5px solid #dcdcdc;width:229px"></div>
<div class="a" style="left:59px;top:0.5px;width:0.6px;height:7px;background:#d0d0d0"></div>
<div class="lbl" style="left:1.8px;top:1.1px;font-size:6px;color:#444">Property</div>
<div class="lbl" style="left:62.3px;top:1.1px;font-size:6px;color:#444">State/Value</div>
<div class="band" style="top:8.099999999999994px;height:9.700000000000017px"><span style="top:calc(1.6500000000000083px + 1.1px)">CC Object</span></div>
<div class="row" style="top:17.80000000000001px;height:9.699999999999989px;background:#f3f3f3"></div>
<div class="lbl" style="top:20.5px">Name</div>
<div class="val" style="top:20.5px"><span style="letter-spacing:-0.55px">MODENA_BUD_7_P2_3_u</span> - Cloud.subsampled.subs...</div>
<div class="row" style="top:27.5px;height:11px;background:#fff"></div>
<div class="lbl" style="top:30.8px">Visible</div>
<div class="cbon" style="left:63.599999999999994px;top:29.5px;width:7px;height:7px"></div>
<div class="row" style="top:38.5px;height:10.300000000000011px;background:#f3f3f3"></div>
<div class="lbl" style="top:41.3px">Show name (in ...</div>
<div class="cb" style="left:63.599999999999994px;top:40.099999999999994px;width:7px;height:7px"></div>
<div class="row" style="top:48.80000000000001px;height:16.399999999999977px;background:#fff"></div>
<div class="lbl" style="top:54.7px">Colors</div>
<div class="combo" style="top:51.19999999999999px;width:163px"><span style="left:15.3px">RGB</span><div class="btn"></div></div>
<svg class="a" style="left:67.3px;top:52.2px" width="9.4" height="9.4" viewBox="0 0 10 10"><circle cx="3.4" cy="3.4" r="2.9" fill="#f01818"/><circle cx="6.6" cy="3.4" r="2.9" fill="#18d818" opacity="0.85"/><circle cx="5" cy="6.4" r="2.9" fill="#1818f0" opacity="0.85"/></svg>
<div class="row" style="top:65.19999999999999px;height:26.600000000000023px;background:#f3f3f3"></div>
<div class="lbl" style="top:76.4px">Box dimensions</div>
<div class="val" style="top:67.9px">X: 43.783</div>
<div class="val" style="top:76.3px">Y: 31.247</div>
<div class="val" style="top:84.8px">Z: 10.595</div>
<div class="row" style="top:91.80000000000001px;height:25.69999999999999px;background:#fff"></div>
<div class="lbl" style="top:102.5px">Box center</div>
<div class="val" style="top:94.1px">X: -8.3055</div>
<div class="val" style="top:102.5px">Y: -21.4775</div>
<div class="val" style="top:110.8px">Z: 7.5135</div>
<div class="row" style="top:117.5px;height:9.699999999999989px;background:#f3f3f3"></div>
<div class="lbl" style="top:120.3px">Info</div>
<div class="val" style="top:120.3px">Object ID: 98 - Children: 0</div>
<div class="row" style="top:127.19999999999999px;height:17.400000000000034px;background:#fff"></div>
<div class="lbl" style="top:133.5px">Current Display</div>
<div class="combo" style="top:129.8px;width:163px"><span>3D View 1</span><div class="btn"></div></div>
<div class="band" style="top:144.60000000000002px;height:8.399999999999977px"><span style="top:calc(0.9999999999999885px + 1.1px)">Cloud</span></div>
<div class="row" style="top:153.0px;height:10.100000000000023px;background:#fff"></div>
<div class="lbl" style="top:155.8px">Points</div>
<div class="val" style="top:155.8px">1,315,507</div>
<div class="row" style="top:163.10000000000002px;height:9.599999999999966px;background:#f3f3f3"></div>
<div class="lbl" style="top:165.4px">Global shift</div>
<div class="val" style="top:165.4px">(0.00;0.00;0.00)</div>
<div class="row" style="top:172.7px;height:9.600000000000023px;background:#fff"></div>
<div class="lbl" style="top:175.0px">Global scale</div>
<div class="val" style="top:175.0px">1.000000</div>
<div class="row" style="top:182.3px;height:16.19999999999999px;background:#f3f3f3"></div>
<div class="lbl" style="top:187.9px">Point size</div>
<div class="combo" style="top:184.10000000000002px;width:163px"><span>Default</span><div class="btn"></div></div>
<div class="band" style="top:198.5px;height:9.600000000000023px"><span style="top:calc(1.6000000000000112px + 1.1px)">Scalar Fields</span></div>
<div class="row" style="top:208.10000000000002px;height:9.399999999999977px;background:#f3f3f3"></div>
<div class="lbl" style="top:210.6px">Count</div>
<div class="val" style="top:210.6px">2</div>
<div class="row" style="top:217.5px;height:17px;background:#fff"></div>
<div class="lbl" style="top:223.9px">Active</div>
<div class="combo" style="top:220.5px;width:163px"><span>Intensity</span><div class="btn"></div></div>
<div class="band" style="top:234.5px;height:8.600000000000023px"><span style="top:calc(1.1000000000000112px + 1.1px)">Color Scale</span></div>
<div class="row" style="top:243.10000000000002px;height:18.0px;background:#fff"></div>
<div class="lbl" style="top:250.0px">Current</div>
<div class="combo" style="top:246.89999999999998px;width:145.5px"><span>Grey</span><div class="btn"></div></div>
<div class="a" style="left:215.5px;top:245.5px;width:13.6px;height:12.8px;background:#f4f4f4;border:0.6px solid #c8c8c8;border-radius:1.5px"></div>
<div class="a" style="left:219.3px;top:248.89999999999998px;width:6px;height:6px;border-radius:50%;border:1.4px dotted #aaa"></div>
<div class="row" style="top:261.1px;height:10.399999999999977px;background:#f3f3f3"></div>
<div class="a" style="left:61.5px;top:261.5px;width:159px;height:6px;background:#fff;border:0.5px solid #ccc;border-radius:2px"></div>
<div class="a" style="left:61.7px;top:262.0px;width:12.5px;height:2px;background:#3aa36a"></div>
<div class="a" style="left:229.5px;top:-1px;width:7px;height:270px;background:#fafafa;border-left:0.5px solid #e4e4e4"></div>
<div class="a" style="left:231.10000000000002px;top:1.6999999999999886px;width:4px;height:139.7px;background:#c2c2c2;border-radius:2px"></div></div>
<div class="a" style="left:274.3px;top:46.8px;width:701.2px;height:11.4px;background:linear-gradient(#f2f2f2,#dcdcdc);border-top:0.6px solid #c4c4c4;border-left:0.8px solid #a8a8a8;border-bottom:0.5px solid #b8b8b8;border-radius:3px 3px 0 0"></div>
<div class="tl" style="left:279.3px;top:49.3px;width:6.6px;height:6.6px;background:#fc5f57;border:0.5px solid #e14640"></div>
<div class="tl" style="left:291.0px;top:49.3px;width:6.6px;height:6.6px;background:#fdbc2e;border:0.5px solid #dfa023"></div>
<div class="tl" style="left:302.59999999999997px;top:49.3px;width:6.6px;height:6.6px;background:#28c840;border:0.5px solid #1aab29"></div>
<div class="t" style="left:610.3px;top:49.9px;font-size:6.75px;color:#222">3D View 1</div>
<div class="a" style="left:275px;top:58px;width:700.5px;height:411px;background:linear-gradient(#03679d 0%,#02334e 50%,#000203 100%)"></div>
<svg class="a" style="left:275px;top:58px" width="700" height="411" viewBox="275 58 700 411">
<defs>
<filter id="speck" x="370" y="150" width="400" height="330" filterUnits="userSpaceOnUse" color-interpolation-filters="sRGB">
<feTurbulence type="fractalNoise" baseFrequency="0.65" numOctaves="1" seed="3" result="f"/>
<feTurbulence type="fractalNoise" baseFrequency="0.12" numOctaves="2" seed="5" result="c"/>
<feColorMatrix in="f" type="matrix" values="1 0 0 0 0  1 0 0 0 0  1 0 0 0 0  0 0 0 0 1" result="f2"/>
<feColorMatrix in="c" type="matrix" values="1 0 0 0 0  1 0 0 0 0  1 0 0 0 0  0 0 0 0 1" result="c2"/>
<feComposite in="f2" in2="c2" operator="arithmetic" k1="0" k2="0.8" k3="0.2" k4="0" result="g"/>
<feComposite in="SourceGraphic" in2="g" operator="arithmetic" k1="0" k2="1" k3="1.2" k4="-0.6" result="m"/>
<feComposite in="m" in2="SourceAlpha" operator="in"/>
</filter>
<filter id="speckD" x="600" y="150" width="170" height="140" filterUnits="userSpaceOnUse" color-interpolation-filters="sRGB">
<feTurbulence type="fractalNoise" baseFrequency="0.8" numOctaves="2" seed="8" result="f"/>
<feColorMatrix in="f" type="matrix" values="1 0 0 0 0  1 0 0 0 0  1 0 0 0 0  0 0 0 0 1" result="g"/>
<feComposite in="SourceGraphic" in2="g" operator="arithmetic" k1="0" k2="1" k3="0.4" k4="-0.2" result="m"/>
<feComposite in="m" in2="SourceAlpha" operator="in"/>
</filter>
<filter id="blur1" x="-50%" y="-50%" width="200%" height="200%"><feGaussianBlur stdDeviation="1.8"/></filter>
<filter id="blur05"><feGaussianBlur stdDeviation="0.6"/></filter>
</defs>
<g fill="none" stroke="#c8c83a" stroke-width="1">
<path d="M377 270L664 104L869 222M377 270V349M869 222V301M664 104V183M377 349L664 183L869 301"/>
</g>
<g filter="url(#speckD)">
<polygon fill="#474747" points="607,205 679,163 754.5,207 754.5,213 672,261 669,258 669,246"/>
<polygon fill="#585858" points="672,256 754.5,208.5 754.5,213 672,261"/>
<path d="M701.9 177.4 L639.9 214.3 M725.2 191 L661.2 225.9 M672.8 251 L754.2 206.5" fill="none" stroke="#7a7a7a" stroke-width="0.9"/>
<path d="M690 170 L628 207 M712 184 L650 220 M737 198 L672 233" fill="none" stroke="#4c4c4c" stroke-width="2"/>
</g>
<g id="cloud" filter="url(#speck)">
<!-- dark building wall -->
<polygon fill="#969696" points="669,262 754.5,213 747,222 747,230 743,236 739,243 735,245.5 731,244 727,250 720,253 716,258 710,259 705,261 699,263 695,268 689,267 684,273 678,273 673,279"/>

<!-- main building -->
<polygon fill="#bababa" points="587,196 609,203 672,242 673,252 675,277 673,287 668,292 664,290 657,298 650,297 645,303 638,304 632,310 626,309 618,316 610,318 604,324 596,325 592,330 589,338 540,314 513,295 510.5,278.6 505.8,271 490,275 487,264 486.5,255.5 492,253 492,235 519,220.5 527,221 535,217 543,220.5 545,224 551,223 552,216"/>
<!-- main building front wall (darker) -->
<polygon fill="#9c9c9c" points="672,246 673,252 675,277 673,287 668,292 664,290 657,298 650,297 645,303 638,304 632,310 626,309 618,316 610,318 604,324 596,325 592,330 588,331 560,318 600,292 640,270"/>
<!-- L building -->
<polygon fill="#afafaf" points="397,329 483,278 589,338 668,383 668,412 582,462 520,425 505,415 494,404 487,400 480,402 472,393 464,395 456,386 448,388 440,379 432,381 425,371 418,373 411,363 404,362 399,353"/>
<!-- L left wall -->
<polygon fill="#7e7e7e" points="397,330 505,390 582,432 582,462 520,425 505,415 494,404 487,400 480,402 472,393 464,395 456,386 448,388 440,379 432,381 425,371 418,373 411,363 404,362 399,353"/>
<!-- L right wall -->
<polygon fill="#a2a2a2" points="582,430 668,383 668,412 582,462"/>
<!-- dark cube -->
<polygon fill="#9a9a9a" points="487,256 492,253 500,262 520,276 540,284 545,300 513,295 510.5,278.6 505.8,271 490,275 487,264"/>
<polygon fill="#5a5a5a" points="542.3,242.4 546.4,229 555,228.5 566.4,238.2 566.4,259 551,266.5 542.3,264"/>
<polygon fill="#7a7a7a" points="546.4,229 555,228.5 566.4,238.2 557,241.5 542.3,242.4"/>
</g>
<g fill="#e0e0e0"><rect x="632.3" y="199.0" width="2" height="0.9" opacity="0.5"/><rect x="624.2" y="200.3" width="1.2" height="0.9" opacity="0.5"/><rect x="720.9" y="206.3" width="1.2" height="0.9" opacity="0.35"/><rect x="639.8" y="200.9" width="1.2" height="0.9" opacity="0.35"/><rect x="684.9" y="243.2" width="1.2" height="0.9" opacity="0.7"/><rect x="679.2" y="179.9" width="1.2" height="0.9" opacity="0.5"/><rect x="704.7" y="213.1" width="0.8" height="0.9" opacity="0.5"/><rect x="693.0" y="184.6" width="1" height="0.9" opacity="0.5"/><rect x="652.3" y="221.0" width="1.2" height="0.9" opacity="0.35"/><rect x="680.7" y="189.5" width="1" height="0.9" opacity="0.7"/><rect x="678.8" y="216.7" width="2" height="0.9" opacity="0.5"/><rect x="640.1" y="212.8" width="0.8" height="0.9" opacity="0.35"/><rect x="652.1" y="235.3" width="2" height="0.9" opacity="0.5"/><rect x="668.5" y="181.8" width="1" height="0.9" opacity="0.7"/><rect x="672.0" y="249.9" width="2" height="0.9" opacity="0.7"/><rect x="652.0" y="210.4" width="1.2" height="0.9" opacity="0.7"/><rect x="667.5" y="187.2" width="0.8" height="0.9" opacity="0.5"/><rect x="719.8" y="201.8" width="1" height="0.9" opacity="0.5"/><rect x="677.9" y="248.3" width="2" height="0.9" opacity="0.5"/><rect x="676.5" y="251.9" width="1.2" height="0.9" opacity="0.5"/><rect x="734.8" y="198.8" width="0.8" height="0.9" opacity="0.5"/><rect x="642.3" y="201.2" width="1.2" height="0.9" opacity="0.5"/><rect x="643.2" y="218.0" width="1.2" height="0.9" opacity="0.35"/><rect x="674.6" y="197.8" width="1" height="0.9" opacity="0.5"/><rect x="688.9" y="229.4" width="0.8" height="0.9" opacity="0.5"/><rect x="653.9" y="195.8" width="0.8" height="0.9" opacity="0.35"/><rect x="616.7" y="203.6" width="1" height="0.9" opacity="0.35"/><rect x="690.0" y="205.1" width="1" height="0.9" opacity="0.7"/><rect x="688.9" y="183.0" width="1" height="0.9" opacity="0.5"/><rect x="659.1" y="195.9" width="2" height="0.9" opacity="0.5"/><rect x="638.3" y="224.5" width="2" height="0.9" opacity="0.35"/><rect x="703.8" y="192.6" width="0.8" height="0.9" opacity="0.35"/><rect x="642.8" y="205.5" width="1" height="0.9" opacity="0.35"/><rect x="656.1" y="199.5" width="0.8" height="0.9" opacity="0.5"/><rect x="694.7" y="181.6" width="2" height="0.9" opacity="0.35"/><rect x="725.4" y="193.5" width="0.8" height="0.9" opacity="0.7"/><rect x="650.0" y="187.8" width="1" height="0.9" opacity="0.35"/><rect x="676.7" y="223.2" width="1.2" height="0.9" opacity="0.7"/><rect x="704.7" y="194.7" width="1.2" height="0.9" opacity="0.7"/><rect x="659.1" y="209.6" width="0.8" height="0.9" opacity="0.5"/><rect x="689.8" y="181.4" width="1" height="0.9" opacity="0.7"/><rect x="669.3" y="250.2" width="1.2" height="0.9" opacity="0.35"/><rect x="660.0" y="179.2" width="2" height="0.9" opacity="0.35"/><rect x="701.2" y="216.6" width="1" height="0.9" opacity="0.5"/><rect x="680.3" y="180.8" width="0.8" height="0.9" opacity="0.35"/><rect x="669.9" y="191.0" width="2" height="0.9" opacity="0.5"/><rect x="711.2" y="192.9" width="1" height="0.9" opacity="0.35"/><rect x="679.6" y="191.9" width="2" height="0.9" opacity="0.7"/><rect x="705.8" y="186.1" width="0.8" height="0.9" opacity="0.35"/><rect x="665.8" y="180.5" width="1.2" height="0.9" opacity="0.7"/><rect x="661.4" y="185.4" width="0.8" height="0.9" opacity="0.5"/><rect x="700.7" y="196.6" width="1.2" height="0.9" opacity="0.35"/><rect x="728.4" y="207.4" width="2" height="0.9" opacity="0.35"/><rect x="689.0" y="227.8" width="2" height="0.9" opacity="0.5"/><rect x="657.4" y="219.2" width="0.8" height="0.9" opacity="0.5"/><rect x="673.0" y="249.5" width="2" height="0.9" opacity="0.5"/><rect x="686.6" y="222.2" width="0.8" height="0.9" opacity="0.5"/><rect x="719.7" y="223.1" width="1.2" height="0.9" opacity="0.7"/><rect x="709.8" y="187.2" width="1" height="0.9" opacity="0.35"/><rect x="646.0" y="196.4" width="1" height="0.9" opacity="0.7"/><rect x="689.5" y="234.1" width="0.8" height="0.9" opacity="0.5"/><rect x="667.3" y="218.6" width="2" height="0.9" opacity="0.5"/><rect x="682.1" y="207.6" width="1.2" height="0.9" opacity="0.5"/><rect x="685.7" y="227.9" width="0.8" height="0.9" opacity="0.7"/><rect x="699.9" y="204.9" width="2" height="0.9" opacity="0.5"/><rect x="705.1" y="198.1" width="2" height="0.9" opacity="0.7"/><rect x="683.1" y="199.8" width="1.2" height="0.9" opacity="0.35"/><rect x="689.3" y="189.0" width="1.2" height="0.9" opacity="0.7"/><rect x="623.7" y="202.1" width="1" height="0.9" opacity="0.35"/><rect x="691.5" y="240.3" width="1.2" height="0.9" opacity="0.35"/><rect x="719.3" y="218.0" width="2" height="0.9" opacity="0.35"/><rect x="718.5" y="220.5" width="1.2" height="0.9" opacity="0.5"/><rect x="652.0" y="205.4" width="0.8" height="0.9" opacity="0.35"/><rect x="698.2" y="219.2" width="1.2" height="0.9" opacity="0.35"/><rect x="735.2" y="214.7" width="1" height="0.9" opacity="0.35"/><rect x="684.7" y="203.7" width="0.8" height="0.9" opacity="0.7"/><rect x="732.4" y="217.8" width="1" height="0.9" opacity="0.35"/><rect x="702.7" y="209.2" width="1" height="0.9" opacity="0.7"/><rect x="711.0" y="218.4" width="2" height="0.9" opacity="0.5"/><rect x="688.2" y="178.5" width="1" height="0.9" opacity="0.5"/><rect x="646.1" y="202.5" width="2" height="0.9" opacity="0.5"/><rect x="701.6" y="185.1" width="1.2" height="0.9" opacity="0.5"/><rect x="656.3" y="213.0" width="1.2" height="0.9" opacity="0.35"/><rect x="657.1" y="224.3" width="1.2" height="0.9" opacity="0.7"/><rect x="663.7" y="206.5" width="1" height="0.9" opacity="0.35"/></g>
<!-- blotches -->
<g fill="#5e5e5e" opacity="0.8" filter="url(#blur1)">
<ellipse cx="594" cy="207.5" rx="10" ry="5"/>
<ellipse cx="570" cy="216.5" rx="8" ry="4.5"/>
<ellipse cx="597" cy="230" rx="10" ry="5.5"/>
<ellipse cx="650.5" cy="239" rx="11" ry="6.5"/>
<ellipse cx="614" cy="260" rx="11" ry="6.5"/>
<ellipse cx="571.4" cy="274.6" rx="9" ry="5"/>
<ellipse cx="552" cy="286.8" rx="8" ry="4"/>

</g>
<g fill="#4a4a4a" opacity="0.35" filter="url(#blur05)">
<polygon points="600,292 650,268 673,262 673,286 668,291 664,289 657,297 650,296 645,302 638,303 632,309 626,308 618,315 610,317 604,322 600,322"/>
</g>
<g fill="none" filter="url(#blur05)">
<path d="M562.6 318 L478.7 365.9" stroke="#505050" stroke-width="1.6" opacity="0.6"/>
<path d="M520 299 L440 345" stroke="#e8e8e8" stroke-width="1.2" opacity="0.5"/>
<path d="M438 303 L546 364" stroke="#5a5a5a" stroke-width="2" opacity="0.35"/>
<path d="M460 291 L600 370" stroke="#6a6a6a" stroke-width="3" opacity="0.25"/>
<path d="M404 335 L500 285" stroke="#e0e0e0" stroke-width="1" opacity="0.4"/>
</g>
<g fill="#3a3a3a" opacity="0.6" filter="url(#blur05)">
<path d="M414 352 l4 8 l3 -6 z"/><path d="M428 360 l3 9 l4 -7 z"/><path d="M446 372 l3 8 l4 -6 z"/><path d="M462 381 l3 7 l3 -5 z"/><path d="M478 390 l3 7 l3 -5 z"/>
</g>
<g fill="none" stroke="#505050" stroke-width="0.9" opacity="0.7" filter="url(#blur05)">
<path d="M514.9 240.7 L534.8 228.2 L542 232"/><path d="M507 236 L527 224"/>
<path d="M552 217 L600 244 L672 246" stroke="#f0f0f0" stroke-width="1" opacity="0.35"/>
</g>
<g fill="none" stroke="#e8e8e8" stroke-width="1" opacity="0.8">
<path d="M596.3 450v-11a3 3 0 0 1 6 0v11"/><path d="M624.8 434v-12a3 3 0 0 1 6 0v12"/><path d="M653.8 418v-12a3 3 0 0 1 6 0v12"/>
<path d="M512.8 421v-10a2.7 2.7 0 0 1 5.4 0v10"/><path d="M540.3 435v-10a2.7 2.7 0 0 1 5.4 0v10"/><path d="M567.8 450v-10a2.7 2.7 0 0 1 5.4 0v10"/>
<path d="M614.3 318v-10a3.2 3.2 0 0 1 6.4 0v10"/><path d="M625.3 312v-9a3 3 0 0 1 6 0v9"/><path d="M647.8 297v-9a3 3 0 0 1 6 0v9"/>
</g>
<!-- windows -->
<g fill="#1a1a1a" filter="url(#blur05)">
<rect x="652.5" y="265" width="2.5" height="5"/><rect x="657.5" y="262.5" width="2.5" height="5"/>
<rect x="628" y="280" width="2.5" height="5"/><rect x="621" y="284.5" width="2.5" height="4.5"/><rect x="613" y="288.5" width="2.5" height="5"/>
<path d="M615 308a2.5 2.5 0 0 1 5 0v9h-5z"/><path d="M626 303a2.3 2.3 0 0 1 4.6 0v8h-4.6z"/><path d="M648.5 288a2.3 2.3 0 0 1 4.6 0v8h-4.6z"/>
<rect x="582.5" y="306" width="2.2" height="4"/><rect x="587.5" y="303.5" width="2.2" height="4"/>
<path d="M597 439a2.3 2.3 0 0 1 4.6 0v10h-4.6z"/><path d="M625.5 422a2.3 2.3 0 0 1 4.6 0v11h-4.6z"/><path d="M654.5 406a2.3 2.3 0 0 1 4.6 0v11h-4.6z"/>
<path d="M513.5 411a2 2 0 0 1 4 0v9h-4z"/><path d="M541 425a2 2 0 0 1 4 0v9h-4z"/><path d="M568.5 440a2 2 0 0 1 4 0v9h-4z"/>
<rect x="404" y="341" width="2.5" height="5"/><rect x="431" y="356" width="2.5" height="5"/><rect x="470" y="379" width="2.5" height="5"/>
<rect x="705" y="246" width="2.5" height="6"/><rect x="712" y="242" width="2" height="5"/>
</g>
<g fill="none" stroke="#dcd434" stroke-width="1.2">
<path d="M377 270L581 386L869 222M581 386V465M377 349L581 465L869 301"/>
</g>
<line x1="798.5" y1="453.5" x2="939" y2="453.5" stroke="#a8a8a8" stroke-width="1"/><path d="M798.8 451.8v3.4M938.7 451.8v3.4" stroke="#c8c8c8" stroke-width="0.9"/>
<text x="866.5" y="463.5" font-size="5.5" fill="#d0d0d0" font-family="Liberation Sans">15</text>
<g stroke-width="1.3" stroke-linecap="round">
<line x1="957" y1="453.5" x2="957" y2="443.5" stroke="#1a8fd0"/>
<line x1="957" y1="453.5" x2="948" y2="448" stroke="#20e020"/>
<line x1="957" y1="453.5" x2="966" y2="448" stroke="#f01010"/>
</g>
</svg>

<div class="a" style="left:22.5px;top:469px;width:953px;height:68px;background:#ececec"></div>
<div class="dockt" style="left:22.5px;top:469.5px;width:953px;height:12px"></div>
<svg class="a" style="left:23px;top:471px" width="20" height="10" viewBox="0 0 20 10"><circle cx="4.7" cy="4.7" r="4" fill="#505050"/><path d="M3 3l3.4 3.4M6.4 3L3 6.4" stroke="#eee" stroke-width="0.9"/><circle cx="14.1" cy="4.7" r="4" fill="#505050"/><circle cx="14.1" cy="4.7" r="2.3" fill="none" stroke="#eee" stroke-width="0.6"/><path d="M13 6l2.4-2.6" stroke="#eee" stroke-width="0.6"/></svg>
<div class="t" style="left:497.5px;top:473.5px;font-size:6.4px;letter-spacing:-0.3px;color:#2a2a2a">Console</div>
<div class="box" style="left:29px;top:488px;width:940px;height:43px;overflow:hidden"><div class="a" style="left:0;top:4px;width:929.5px;height:9.5px;background:#fff"></div>
<div class="a" style="left:0;top:13.5px;width:929.5px;height:9.5px;background:#f3f3f3"></div>
<div class="a" style="left:0;top:23px;width:929.5px;height:9.5px;background:#fff"></div>
<div class="a" style="left:0;top:32.5px;width:929.5px;height:9.5px;background:#f3f3f3"></div>
<div class="a" style="left:0;top:-1px;width:929.5px;height:5px;background:#f3f3f3"></div>
<div class="con" style="left:2.5px;top:-2.4px;color:#333">[13:45:15] [Subsampling] Timing: 17.590 s.</div>
<div class="con" style="left:2.5px;top:6.8px;color:#333">[13:45:32] [I/O] File '/Users/mima-01/Desktop/MODENA.e57' saved successfully</div>
<div class="con" style="left:2.5px;top:16.1px;color:#a0282a">[13:49:15] [ccPointCloud::resizeTheRGBTable] Internal error: properties (re)allocation before points allocation is forbidden!</div>
<div class="con" style="left:2.5px;top:25.5px;color:#f02a2a">[13:49:15] [ccPointCloud::resize] Not enough memory!</div>
<div class="con" style="left:2.5px;top:34.8px;color:#333">[13:52:39] [I/O] File '/Users/mima-01/Desktop/MODENA2.e57' saved successfully</div>
<div class="a" style="left:929.5px;top:-1px;width:10px;height:45px;background:#fafafa;border-left:0.5px solid #e4e4e4"></div>
<div class="a" style="left:932.5px;top:30px;width:4.5px;height:10.5px;background:#c4c4c4;border-radius:2.2px"></div></div>
<div class="a" style="left:0;top:537px;width:999px;height:5px;background:#e2e2e2;border-top:1px solid #b8b8b8"></div>
</body></html>
